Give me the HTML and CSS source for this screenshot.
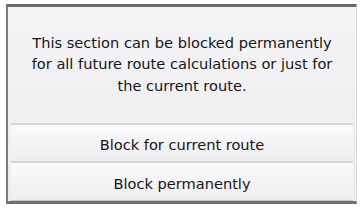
FILE: index.html
```html
<!DOCTYPE html>
<html lang="en">
<head>
    <meta charset="UTF-8">
    <title>Block section</title>
    <link rel="stylesheet" href="styles.css">
</head>
<body>
    <div class="dialog">
        <div class="message">
            This section can be blocked permanently<br>
            for all future route calculations or just for<br>
            the current route.
        </div>
        <button class="option">Block for current route</button>
        <button class="option">Block permanently</button>
    </div>
</body>
</html>
```
FILE: styles.css
```css
body {
    margin: 0;
    padding: 4px 5px 5px 6px;
    background-color: #ffffff;
    font-family: 'DejaVu Sans', sans-serif;
    color: #151515;
}
.dialog {
    display: flex;
    flex-direction: column;
    height: 200px;
    box-sizing: border-box;
    border-top: 3px solid #6b6b6b;
    border-left: 2px solid #7a7a7a;
    border-bottom: 3px solid #707070;
    border-right: 1px solid #d8d8dc;
    background: linear-gradient(to bottom, #f4f4f6, #ececef);
    padding: 0 3px;
}
.message {
    height: 118px;
    box-sizing: border-box;
    display: flex;
    align-items: center;
    justify-content: center;
    text-align: center;
    font-size: 14.6px;
    line-height: 21.5px;
    padding-bottom: 2px;
    border-bottom: 2px solid #d6d6da;
}
.option {
    height: 38px;
    box-sizing: border-box;
    margin: 0;
    padding: 3px 0 0;
    border: none;
    border-bottom: 2px solid #d6d6da;
    background: linear-gradient(to bottom, #fafafb, #eeeef1);
    font-family: 'DejaVu Sans', sans-serif;
    font-size: 14.6px;
    color: #151515;
}
.option:last-child {
    border-bottom: 1px solid #c4c4c8;
}
```
